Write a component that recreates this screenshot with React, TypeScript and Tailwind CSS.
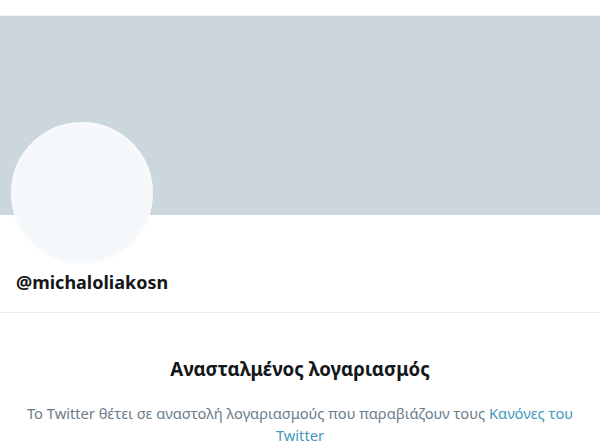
export default function App() {
  return (
    <main className="w-[600px] h-[441px] bg-white overflow-hidden font-['Noto_Sans',sans-serif]">
      <div className="h-[16px] bg-white border-b border-[#eef1f3]" />
      <div className="h-[199px] bg-[#ccd6dd]" />
      <div className="px-[11px]">
        <div className="-mt-[93px] w-[142px] h-[142px] rounded-full bg-[#f5f8fa] border-[3px] border-[#f7f9fa]" />
        <h2 className="mt-[4px] pl-[5px] h-[29px] text-[18px] leading-[29px] font-bold text-[#14171a]">
          @michaloliakosn
        </h2>
      </div>
      <div className="mt-[15px] border-t border-[#e6ecf0]" />
      <div className="flex flex-col items-center pt-[43px] px-[20px] text-center">
        <h1 className="text-[18.7px] leading-[26px] font-bold text-[#14171a]">
          Ανασταλμένος λογαριασμός
        </h1>
        <p className="mt-[20px] text-[14.7px] leading-[22px] text-[#6b7c8a]">
          Το Twitter θέτει σε αναστολή λογαριασμούς που παραβιάζουν τους{" "}
          <span className="text-[#4199bd]">Κανόνες του Twitter</span>
        </p>
      </div>
    </main>
  );
}
